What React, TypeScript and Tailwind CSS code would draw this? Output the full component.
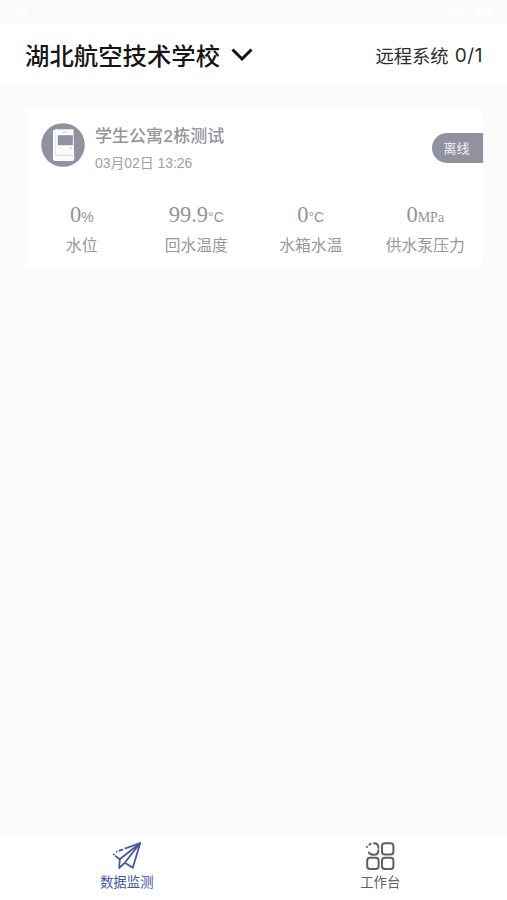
type Reading = {
  value: string;
  unit: string;
  label: string;
  unitClass: string;
};

const serifUnit = "font-['Liberation_Serif',serif] text-[14px]";
const sansUnit = "font-['Liberation_Sans',sans-serif] text-[14px]";

const readings: Reading[] = [
  { value: "0", unit: "%", label: "水位", unitClass: sansUnit },
  { value: "99.9", unit: "°C", label: "回水温度", unitClass: sansUnit },
  { value: "0", unit: "°C", label: "水箱水温", unitClass: sansUnit },
  { value: "0", unit: "MPa", label: "供水泵压力", unitClass: serifUnit },
];

function StatusBar() {
  return (
    <div className="flex h-6 shrink-0 items-center justify-between bg-[#fafafa] pl-4 pr-3">
      <span className="h-2 w-3 rounded-full bg-[#fdfdfd]" />
      <div className="flex items-center gap-3">
        <span className="h-2 w-4 rounded-full bg-[#fcfcfc]" />
        <span className="h-2 w-5 rounded-full bg-[#fefefe]" />
      </div>
    </div>
  );
}

function Header() {
  return (
    <header className="flex h-[60px] shrink-0 items-center justify-between bg-white px-6 pt-0.5">
      <button className="flex items-center pl-px text-[24.4px] font-medium leading-none text-[#161616]">
        <span>湖北航空技术学校</span>
        <svg className="ml-[11px] h-[14px] w-[22px]" viewBox="0 0 22 14" fill="none">
          <path d="M1.5 1.5 11 11 20.5 1.5" stroke="#111" strokeWidth="3" />
        </svg>
      </button>
      <div className="flex items-center gap-[6px] text-[18.3px] leading-none text-[#2b2b2b]">
        <span>远程系统</span>
        <span className="font-['Inter',sans-serif] text-[19px] tracking-[0.6px]">0/1</span>
      </div>
    </header>
  );
}

function DeviceIcon() {
  return (
    <svg className="size-11 shrink-0" viewBox="0 0 44 44">
      <circle cx="22" cy="22" r="21.8" fill="#9192a0" />
      <path d="M12 7.2 15 6.2h17.4l.9 29.6-1.2 2.2H13.3L12 36.5z" fill="#fafafd" />
      <path d="M14.5 8v24" stroke="#dedee6" strokeWidth=".7" />
      <path d="M14 32.3h18.7" stroke="#d2d2dc" strokeWidth=".8" />
      <path d="M21 9.3h5" stroke="#c9c9d3" strokeWidth=".8" />
      <rect x="16.8" y="12.2" width="15" height="10" fill="#9192a0" />
      <circle cx="30" cy="25.3" r=".8" fill="#aaaab6" />
    </svg>
  );
}

function DeviceCard() {
  return (
    <section className="flex h-40 flex-col rounded-md bg-white">
      <div className="flex h-[88px] items-start pl-4 pt-[15px]">
        <DeviceIcon />
        <div className="ml-[10px] mt-0.5 flex flex-col">
          <h2 className="h-5 text-[17px] font-medium leading-5 text-[#949499]">
            学生公寓<span className="font-['Inter',sans-serif] text-[16.5px]">2</span>栋测试
          </h2>
          <p className="mt-[10px] font-['Liberation_Sans','Noto_Sans_CJK_SC',sans-serif] text-[13.9px] leading-4 text-[#a0a0a4]">
            03月02日 13:26
          </p>
        </div>
        <span className="ml-auto mt-[10px] flex h-[30px] w-[51px] items-center justify-center rounded-l-full bg-[#9192a0] pb-0.5 pr-0.5 text-[13px] leading-none text-[#f3f3f7]">
          离线
        </span>
      </div>
      <div className="grid grid-cols-4">
        {readings.map((item) => (
          <div key={item.label} className="flex flex-col items-center pr-px">
            <div className="flex h-[38px] items-baseline text-[#939398]">
              <span className="font-['Liberation_Serif',serif] text-[22.5px] leading-[38px]">
                {item.value}
              </span>
              <span className={item.unitClass}>{item.unit}</span>
            </div>
            <span className="text-[15.8px] leading-[22px] text-[#98989d]">{item.label}</span>
          </div>
        ))}
      </div>
    </section>
  );
}

function PlaneIcon() {
  return (
    <svg
      className="h-7 w-[30px]"
      viewBox="0 0 30 28"
      fill="none"
      stroke="#4557a5"
      strokeWidth="1.8"
      strokeLinejoin="round"
      strokeLinecap="round"
    >
      <path d="M28.2 1 20.8 25.8 12.8 20.8 7.2 26 7.8 17.2 28.2 1 12.8 20.8" />
      <path d="M7.8 17.2 3.8 14.2M28.2 1 13.5 6.4M10.4 7.6 7.6 8.7M4.6 9.8h.1M1.8 12.4l.2.2" />
    </svg>
  );
}

function GridIcon() {
  return (
    <svg
      className="h-7 w-[30px]"
      viewBox="0 0 30 28"
      fill="none"
      stroke="#5e5f67"
      strokeWidth="2"
      strokeLinecap="round"
    >
      <path d="M9 1.3c3.2 0 4.4 1.3 4.4 4.6M13.4 8.2c0 3.2-1.3 4.5-4.7 4.5-2.7 0-4.1-.6-4.8-2.2M1.8 5h.1M4.4 2.6l1.1-.8" />
      <rect x="17" y="1.2" width="11.4" height="11.4" rx="2.8" />
      <rect x="2.2" y="15.8" width="11.4" height="11.2" rx="2.8" />
      <rect x="17" y="15.8" width="11.4" height="11.2" rx="2.8" />
    </svg>
  );
}

function TabBar() {
  return (
    <nav className="grid h-[66px] shrink-0 grid-cols-2 bg-white pt-2">
      <button className="flex flex-col items-center text-[13.4px] leading-4 text-[#4557a5]">
        <PlaneIcon />
        <span className="mt-[3px]">数据监测</span>
      </button>
      <button className="flex flex-col items-center text-[13.4px] leading-4 text-[#5e5f67]">
        <GridIcon />
        <span className="mt-[3px]">工作台</span>
      </button>
    </nav>
  );
}

export default function App() {
  return (
    <div className="flex h-[900px] w-[507px] flex-col overflow-hidden bg-[#fafafa] font-['Noto_Sans_CJK_SC',sans-serif]">
      <StatusBar />
      <Header />
      <main className="flex-1 pl-[25px] pr-6 pt-6">
        <DeviceCard />
      </main>
      <TabBar />
    </div>
  );
}
